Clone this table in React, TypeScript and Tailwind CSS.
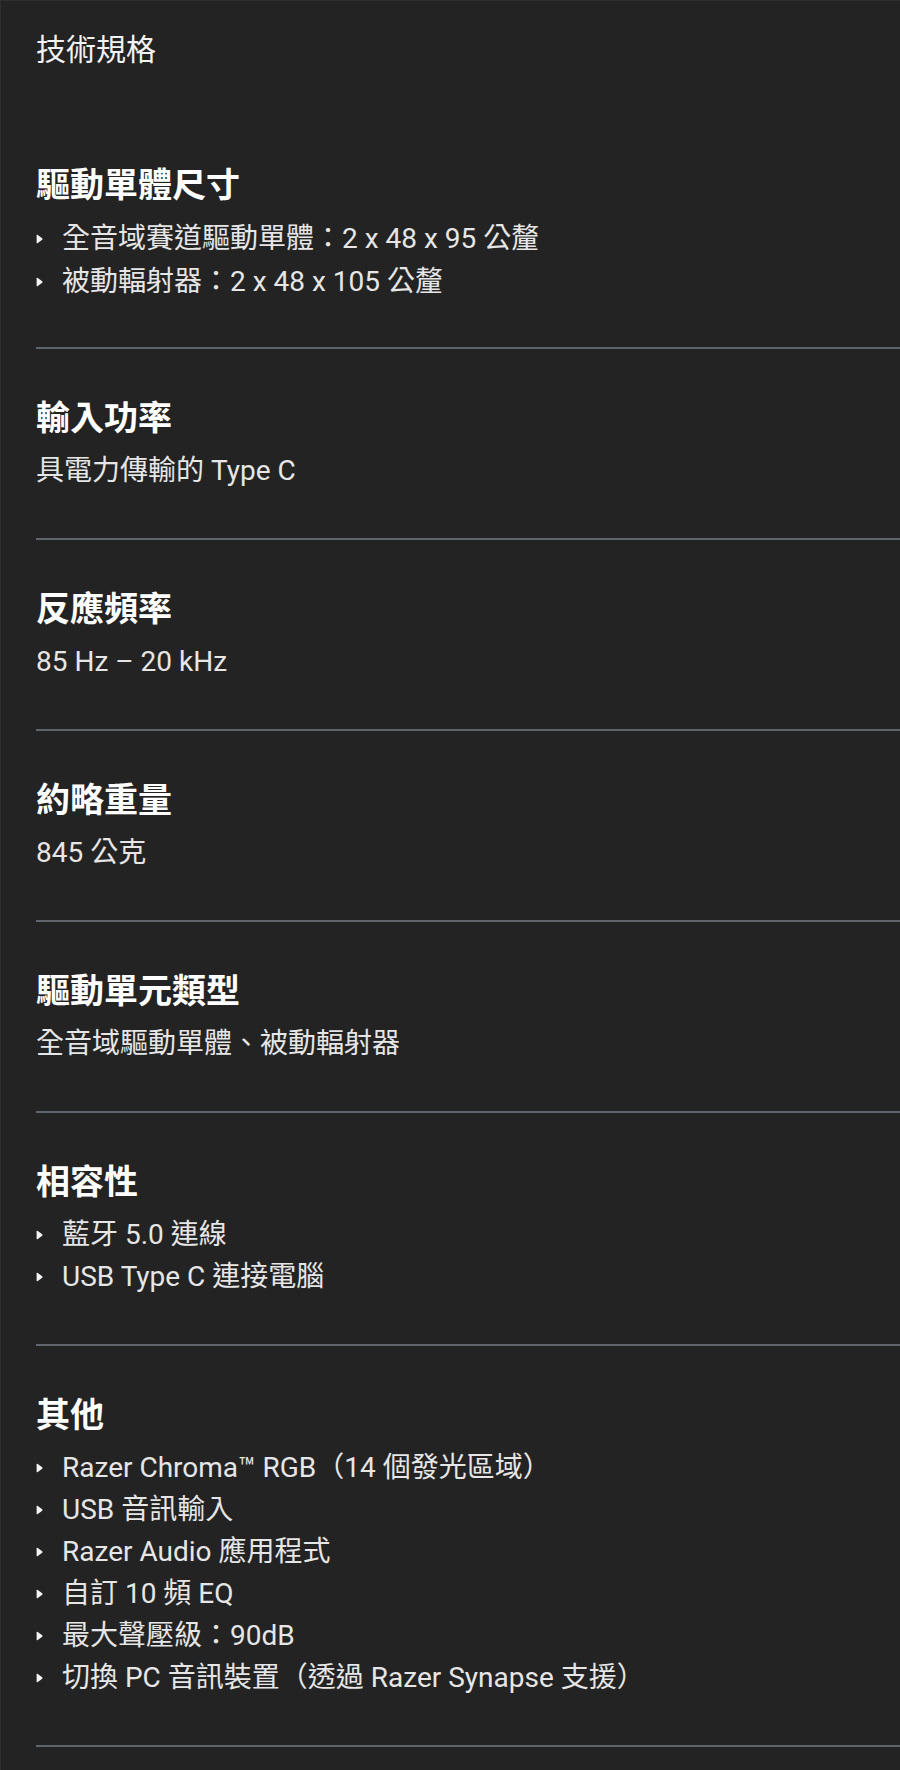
import React from 'react';

type Spec = {
  title: string;
  items: string[];
  list?: boolean;
};

const specs: Spec[] = [
  { title: '驅動單體尺寸', list: true, items: ['全音域賽道驅動單體：2 x 48 x 95 公釐', '被動輻射器：2 x 48 x 105 公釐'] },
  { title: '輸入功率', items: ['具電力傳輸的 Type C'] },
  { title: '反應頻率', items: ['85 Hz – 20 kHz'] },
  { title: '約略重量', items: ['845 公克'] },
  { title: '驅動單元類型', items: ['全音域驅動單體、被動輻射器'] },
  { title: '相容性', list: true, items: ['藍牙 5.0 連線', 'USB Type C 連接電腦'] },
  {
    title: '其他',
    list: true,
    items: [
      'Razer Chroma™ RGB（14 個發光區域）',
      'USB 音訊輸入',
      'Razer Audio 應用程式',
      '自訂 10 頻 EQ',
      '最大聲壓級：90dB',
      '切換 PC 音訊裝置（透過 Razer Synapse 支援）',
    ],
  },
];

function Bullet() {
  return (
    <svg width="7" height="10" viewBox="0 0 7 10" className="shrink-0">
      <path d="M0.6 1.4 Q0.6 0.2 1.8 0.9 L6.2 4.2 Q6.9 5 6.2 5.8 L1.8 9.1 Q0.6 9.8 0.6 8.6 Z" fill="#f4f4f4" />
    </svg>
  );
}

function SpecSection({ spec, first }: { spec: Spec; first?: boolean }) {
  // first block sits under the page title, so no rule above it
  const lh = first ? 'leading-[43px]' : 'leading-[42px]';
  return (
    <section className={first ? 'pt-[95px] pb-[44px]' : 'pt-[49px] pb-[46px] border-t-2 border-[#5e656d]'}>
      <h3 className="text-[34px] leading-[40px] font-bold text-white mb-3">{spec.title}</h3>
      {spec.list ? (
        <ul>
          {spec.items.map((item) => (
            <li key={item} className={`flex items-center text-[28px] text-[#e6e6e6] ${lh}`}>
              <span className="w-[26px] flex items-center">
                <Bullet />
              </span>
              <span>{item}</span>
            </li>
          ))}
        </ul>
      ) : (
        spec.items.map((item) => (
          <p key={item} className={`text-[28px] text-[#e6e6e6] ${lh}`}>
            {item}
          </p>
        ))
      )}
    </section>
  );
}

export default function App() {
  return (
    <div
      lang="zh-Hant"
      className="min-h-[1770px] w-[900px] bg-[#232323] border-t border-l border-[#2e2e2e] overflow-hidden"
      style={{ fontFamily: 'Roboto, "Noto Sans CJK TC", sans-serif' }}
    >
      <div className="pl-[35px] pt-[29px]">
        <h2 className="text-[30px] leading-[40px] text-[#f2f2f2]">技術規格</h2>
        {specs.map((spec, i) => (
          <SpecSection key={spec.title} spec={spec} first={i === 0} />
        ))}
        <div className="border-t-2 border-[#5e656d]" />
      </div>
    </div>
  );
}
